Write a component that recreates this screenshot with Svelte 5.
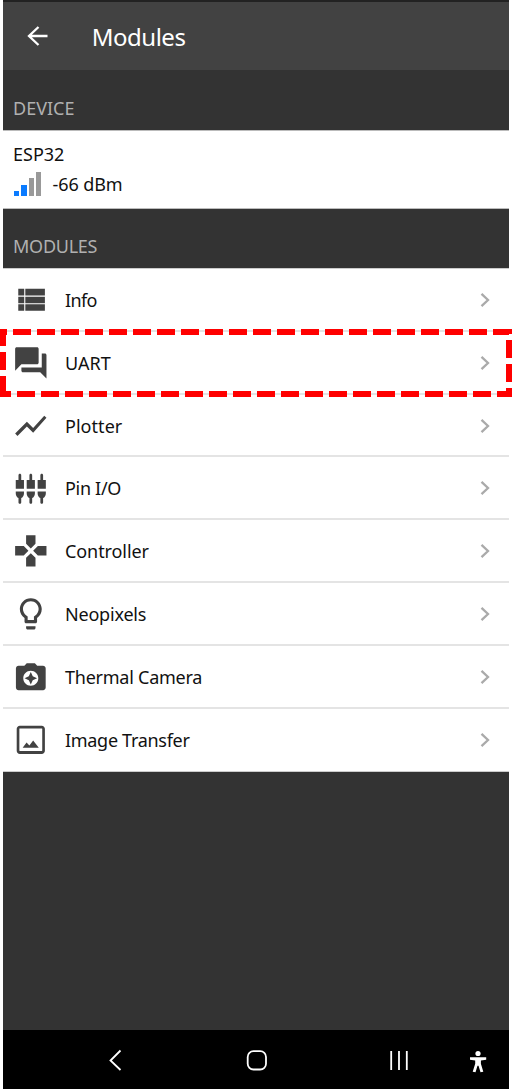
<script>
  const modules = [
    { name: 'Info', icon: 'list', spacing: -0.6 },
    { name: 'UART', icon: 'forum', spacing: 0 },
    { name: 'Plotter', icon: 'chart', spacing: 0.05 },
    { name: 'Pin I/O', icon: 'pins', spacing: -0.3 },
    { name: 'Controller', icon: 'gamepad', spacing: -0.08 },
    { name: 'Neopixels', icon: 'bulb', spacing: -0.2 },
    { name: 'Thermal Camera', icon: 'camera', spacing: -0.24 },
    { name: 'Image Transfer', icon: 'image', spacing: -0.3 }
  ];

  const icons = {
    list: 'M4 14.200h3.800v-4.200H4v4.200zM4 19h3.800v-4.100H4V19zM4 9.300h3.800V5H4v4.300zM8.500 14.200H21v-4.200H8.500v4.200zM8.500 19H21v-4.100H8.500V19zM8.500 5v4.300H21V5H8.500z',
    forum: 'M21 6h-2v9H6v2c0 .55.45 1 1 1h11l4 4V7c0-.55-.45-1-1-1zm-4 6V3c0-.55-.45-1-1-1H3c-.55 0-1 .45-1 1v14l4-4h10c.55 0 1-.45 1-1z',
    chart: 'M3.5 18.49l6-6.01 4 4L22 6.92l-1.41-1.41-7.09 7.97-4-4L2 16.99z',
    pins: 'M5 2c0-.55-.45-1-1-1s-1 .45-1 1v3.500H1v6.500h6V5.500H5V2zm4 13.500c0 1.500.84 2.900 2 3.320V22c0 1.300 2 1.300 2 0v-3.180c1.160-.42 2-1.820 2-3.320V14H9v1.500zm-8 0c0 1.500.84 2.900 2 3.320V22c0 1.300 2 1.300 2 0v-3.180C6.160 18.400 7 17 7 15.500V14H1v1.500zM21 5.500V2c0-.55-.45-1-1-1s-1 .45-1 1v3.500h-2V12h6V5.500h-2zM13 2c0-.55-.45-1-1-1s-1 .45-1 1v3.500H9V12h6V5.500h-2V2zm4 13.500c0 1.500.84 2.900 2 3.320V22c0 1.300 2 1.300 2 0v-3.180c1.160-.42 2-1.820 2-3.320V14h-6v1.500z',
    gamepad: 'M15 7.5V2H9v5.5l3 3 3-3zM7.5 9H2v6h5.5l3-3-3-3zM9 16.5V22h6v-5.5l-3-3-3 3zM16.5 9l-3 3 3 3H22V9h-5.5z',
    bulb: 'M9 21c0 .55.45 1 1 1h4c.55 0 1-.45 1-1v-1H9v1zm3-19C8.14 2 5 5.14 5 9c0 2.38 1.19 4.47 3 5.74V17c0 .55.45 1 1 1h6c.55 0 1-.45 1-1v-2.26c1.81-1.27 3-3.36 3-5.74 0-3.86-3.14-7-7-7zm2.85 11.1l-.85.6V16h-4v-2.3l-.85-.6C7.8 12.16 7 10.63 7 9c0-2.76 2.24-5 5-5s5 2.24 5 5c0 1.63-.8 3.16-2.15 4.1z',
    camera: 'M9.4 3.4L7.9 5H4.2c-1 0-1.700.8-1.700 1.700v12.200c0 1 .8 1.700 1.700 1.700h15.600c1 0 1.700-.8 1.700-1.700V6.700c0-1-.8-1.700-1.700-1.700h-3.700l-1.500-1.600H9.400zM12 17.700c-2.650 0-4.800-2.150-4.800-4.800s2.150-4.800 4.800-4.800 4.800 2.150 4.800 4.800-2.150 4.800-4.800 4.800zm0-.8l1.250-2.750L16 12.900l-2.750-1.250L12 8.900l-1.250 2.750L8 12.900l2.750 1.250z',
    image: 'M19 4.800c.200 0 .300.100.300.300v13.800c0 .200-.100.300-.300.300H5c-.200 0-.300-.100-.300-.300V5.100c0-.200.100-.300.300-.300h14M19 3H5c-1.100 0-2 .9-2 2v14c0 1.100.9 2 2 2h14c1.100 0 2-.9 2-2V5c0-1.100-.9-2-2-2zM6.800 17l2.500-3.300 1.800 1.900 2.400-3.200L17.100 17z'
  };
</script>

<div class="phone">
  <header>
    <svg class="arrow" viewBox="0 0 22 20"><path d="M20.500 10H2M11.500 1L2 10l9.500 9" /></svg>
    <h1>Modules</h1>
  </header>

  <h2 class="first">DEVICE</h2>
  <section class="device">
    <div class="name">ESP32</div>
    <div class="signal">
      <i class="on" style:height="5px"></i>
      <i class="on" style:height="11px"></i>
      <i style:height="17.500px"></i>
      <i style:height="23.500px"></i>
      <span>-66 dBm</span>
    </div>
  </section>

  <h2 class="second">MODULES</h2>
  <ul>
    {#each modules as m}
      <li>
        <svg class="icon" viewBox={m.icon === 'pins' ? '-1.750 -1.750 27.500 27.500' : '0 0 24 24'}>
          <path d={icons[m.icon]} fill-rule="evenodd" />
        </svg>
        <span class="label" style:letter-spacing="{m.spacing}px">{m.name}</span>
        <svg class="chevron" viewBox="0 0 10 16"><path d="M1.500 1.800L8 8l-6.500 6.200" /></svg>
        {#if m.icon === 'forum'}
          <svg class="outline" viewBox="0 0 512 68"><path d="M3 65V3H509V65Z" /></svg>
        {/if}
      </li>
    {/each}
  </ul>

  <div class="blank"></div>

  <nav>
    <svg viewBox="0 0 506 59">
      <path d="M117.500 20.500L107.500 30.500l10 9.500" />
      <rect x="244.700" y="21.200" width="18.300" height="18.300" rx="5.800" />
      <path d="M388.200 21v19M396 21v19M403.800 21v19" />
      <g class="person">
        <circle cx="475" cy="23.500" r="2.600" />
        <path d="M467 27.300h16.200v2.400l-5.300.7v3.300l2.400 8-2.800.6-2-6.500h-1l-2 6.500-2.800-.6 2.500-8v-3.300l-5.200-.7z" />
      </g>
    </svg>
  </nav>
</div>

<style>
  :global(body) { background: #fff; }
  .phone {
    box-sizing: border-box;
    width: 506px;
    height: 1089px;
    margin: 0 3px;
    display: flex;
    flex-direction: column;
    background: #333;
    color: #111;
    font-family: "Noto Sans", sans-serif;
    font-size: 18px;
  }
  header {
    box-sizing: border-box;
    height: 70px;
    flex: none;
    display: flex;
    align-items: center;
    gap: 42.800px;
    padding: 0 0 0 24px;
    border-top: 2px solid #222;
    background: #424242;
    color: #fff;
  }
  .arrow { width: 22px; height: 20px; fill: none; stroke: #fff; stroke-width: 2.300; }
  h1 { margin: 0; padding-top: 2px; font-size: 24px; font-weight: 400; line-height: 32px; letter-spacing: -0.500px; }
  h2 {
    box-sizing: border-box;
    flex: none;
    height: 59.400px;
    margin: 0;
    padding: 24px 0 0 10px;
    font-size: 18px;
    font-weight: 400;
    line-height: 26px;
    color: #b0b0b0;
  }
  .first { height: 59.500px; padding-top: 25px; }
  .second { letter-spacing: -0.250px; }
  .device {
    box-sizing: border-box;
    flex: none;
    height: 79px;
    padding: 11px 10px 0;
    border-top: 1px solid #bbb;
    border-bottom: 1px solid #bbb;
    background: #fff;
  }
  .name { height: 26px; line-height: 25px; }
  .signal { display: flex; align-items: flex-end; gap: 2.200px; height: 28px; padding-left: 1px; }
  .signal i { width: 5.200px; background: #999; }
  .signal .on { background: #0a7bff; }
  .signal span { margin-left: 9px; line-height: 24px; letter-spacing: -0.100px; }
  ul {
    flex: none;
    margin: 0;
    padding: 0;
    list-style: none;
    background: #fff;
    border-top: 1px solid #ccc;
    box-sizing: border-box;
  }
  li {
    position: relative;
    box-sizing: border-box;
    height: 62.850px;
    display: flex;
    align-items: center;
    padding: 1.100px 19.500px 0 9.100px;
    border-bottom: 2px solid #e4e4e4;
  }
  li:last-child { border-bottom: 1px solid #ccc; }
  .icon { width: 37.600px; height: 37.600px; flex: none; fill: #424242; }
  .label { flex: 1; padding-left: 15.300px; white-space: nowrap; }
  .chevron { width: 10px; height: 16px; fill: none; stroke: #aaa; stroke-width: 2.300; }
  .outline {
    position: absolute;
    left: -3px;
    top: -2.750px;
    width: 512px;
    height: 68px;
    z-index: 1;
    fill: none;
    stroke: #f00;
    stroke-width: 6;
    stroke-dasharray: 18 6;
  }
  .blank { flex: 1; }
  nav { flex: none; height: 59px; background: #000; }
  nav svg { display: block; width: 506px; height: 59px; fill: none; stroke: #fff; stroke-width: 1.800; }
  .person { fill: #fff; stroke: none; }
</style>
